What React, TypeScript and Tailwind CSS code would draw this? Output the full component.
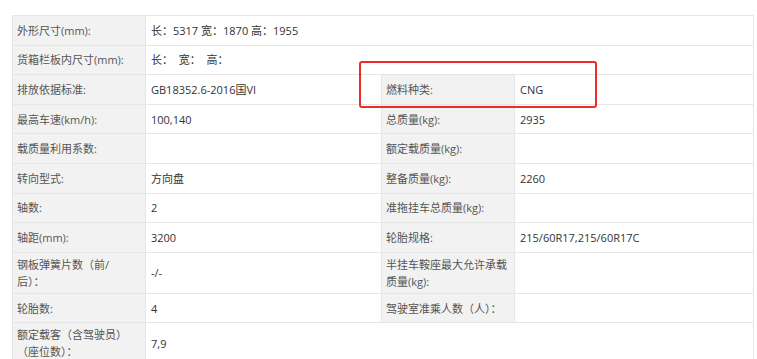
import type { ReactNode } from "react";

const rows: { l1: ReactNode; v1: string; l2?: string; v2?: string; span?: boolean }[] = [
  { l1: "外形尺寸(mm):", v1: "长：5317 宽：1870 高：1955", span: true },
  { l1: "货箱栏板内尺寸(mm):", v1: "长：  宽：  高：", span: true },
  { l1: "排放依据标准:", v1: "GB18352.6-2016国VI", l2: "燃料种类:", v2: "CNG" },
  { l1: "最高车速(km/h):", v1: "100,140", l2: "总质量(kg):", v2: "2935" },
  { l1: "载质量利用系数:", v1: "", l2: "额定载质量(kg):", v2: "" },
  { l1: "转向型式:", v1: "方向盘", l2: "整备质量(kg):", v2: "2260" },
  { l1: "轴数:", v1: "2", l2: "准拖挂车总质量(kg):", v2: "" },
  { l1: "轴距(mm):", v1: "3200", l2: "轮胎规格:", v2: "215/60R17,215/60R17C" },
  {
    l1: (
      <>
        钢板弹簧片数（前/
        <br />
        后）：
      </>
    ),
    v1: "-/-",
    l2: "半挂车鞍座最大允许承载质量(kg):",
    v2: "",
  },
  { l1: "轮胎数:", v1: "4", l2: "驾驶室准乘人数（人）：", v2: "" },
  {
    l1: (
      <>
        额定载客（含驾驶员）
        <br />
        （座位数）：
      </>
    ),
    v1: "7,9",
    span: true,
  },
];

const label = "h-[29.6px] bg-[#f2f2f2] border border-[#e6e6e6] pl-[4px] pr-[2px] py-[3px] align-middle text-[#555] break-all";
const value = "h-[29.6px] bg-white border border-[#e6e6e6] pl-[5px] pr-[4px] py-[3px] align-middle text-[#333]";

export default function App() {
  return (
    <div
      className="relative w-[757px] h-[359px] overflow-hidden bg-white text-[11px] leading-[17px]"
      style={{ fontFamily: '"Open Sans", "Noto Sans CJK SC", sans-serif' }}
    >
      <table className="ml-[12px] mt-[15px] w-[741px] table-fixed border-collapse">
        <colgroup>
          <col className="w-[133px]" />
          <col className="w-[236px]" />
          <col className="w-[133px]" />
          <col className="w-[239px]" />
        </colgroup>
        <tbody>
          {rows.map((r, i) => (
            <tr key={i}>
              <td className={label}>{r.l1}</td>
              {r.span ? (
                <td className={value} colSpan={3}>
                  <span className="whitespace-pre">{r.v1}</span>
                </td>
              ) : (
                <>
                  <td className={value}>{r.v1}</td>
                  <td className={label}>{r.l2}</td>
                  <td className={value}>{r.v2}</td>
                </>
              )}
            </tr>
          ))}
        </tbody>
      </table>
      <div className="absolute left-[359px] top-[61px] w-[238px] h-[47px] border-2 border-[#ec2b2b] rounded-[3px]" />
    </div>
  );
}
